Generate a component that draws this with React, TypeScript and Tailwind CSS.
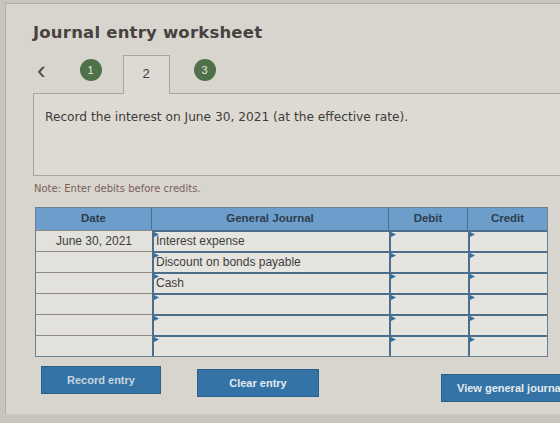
import React from 'react';

const rows = [
  { date: 'June 30, 2021', account: 'Interest expense' },
  { date: '', account: 'Discount on bonds payable' },
  { date: '', account: 'Cash' },
  { date: '', account: '' },
  { date: '', account: '' },
  { date: '', account: '' },
];

function Flag() {
  return (
    <svg className="absolute left-0 top-0" width="5" height="6" viewBox="0 0 5 6">
      <path d="M0 0 L5 2.5 L0 5 Z" fill="#2f6fa3" />
    </svg>
  );
}

function InputCell({ text, w }: { text?: string; w: string }) {
  return (
    <div className={`relative ${w} h-full border-l-2 border-t-2 border-[#4a6e8c] bg-[#e6e4de] px-[2px] text-[12px] leading-[18px] text-[#3d3d3d]`}>
      <Flag />
      {text}
    </div>
  );
}

export default function App() {
  return (
    <div className="w-[560px] h-[423px] overflow-hidden bg-[#c9c5be] pl-[5px] pt-[3px]" style={{ fontFamily: '"DejaVu Sans", Verdana, sans-serif' }}>
      <div className="h-[411px] overflow-hidden border-l border-t border-[#b3aea6] bg-[#d8d5ce] flex flex-col">
        <h1 className="pl-[27px] pt-[18px] text-[16.5px] font-bold tracking-[0.2px] text-[#47423f] leading-[22px]">Journal entry worksheet</h1>

        <div className="flex items-end h-[38px] mt-[11px] ml-[27px]">
          <div className="flex items-center h-full pb-[8px]">
            <span className="ml-[4px] text-[26px] leading-none text-[#4a4744] font-light" style={{ fontFamily: '"Liberation Sans", Arial, sans-serif' }}>&lsaquo;</span>
            <span className="ml-[34px] w-[22px] h-[22px] rounded-full bg-[#4f7048] flex items-center justify-center text-[11px] text-[#e6e8e0]" style={{ fontFamily: '"Liberation Sans", Arial, sans-serif' }}>1</span>
          </div>
          <div className="ml-[21px] w-[47px] h-[39px] border border-b-0 border-[#a9a49c] bg-[#dcd9d2] flex items-center justify-center pb-[3px] text-[13px] text-[#3e3c3a] mb-[-1px] relative z-10" style={{ fontFamily: '"Liberation Sans", Arial, sans-serif' }}>2</div>
          <div className="flex items-center h-full pb-[8px]">
            <span className="ml-[24px] w-[22px] h-[22px] rounded-full bg-[#4f7048] flex items-center justify-center text-[11px] text-[#e6e8e0]" style={{ fontFamily: '"Liberation Sans", Arial, sans-serif' }}>3</span>
          </div>
        </div>

        <div className="ml-[27px] h-[83px] border border-r-0 border-[#a9a49c] bg-[#dddad3] pl-[11px] pt-[14px] text-[12.2px] text-[#3f3c3a]">
          Record the interest on June 30, 2021 (at the effective rate).
        </div>

        <p className="ml-[28px] mt-[5px] text-[10px] text-[#7a5f59]">Note: Enter debits before credits.</p>

        <div className="ml-[29px] mt-[11px] w-[513px] border border-[#6b7f90] bg-[#e3e1db]" style={{ fontFamily: '"Liberation Sans", Arial, sans-serif' }}>
          <div className="flex h-[22px] bg-[#6d9dca] text-[11.5px] font-bold text-[#2e3d4c]">
            <div className="w-[116px] flex items-center justify-center border-r border-[#4a6e8c]">Date</div>
            <div className="w-[237px] flex items-center justify-center border-r border-[#4a6e8c]">General Journal</div>
            <div className="w-[79px] flex items-center justify-center border-r border-[#4a6e8c]">Debit</div>
            <div className="flex-1 flex items-center justify-center">Credit</div>
          </div>
          {rows.map((r, i) => (
            <div key={i} className="flex h-[21px]">
              <div className="w-[116px] h-full border-t border-[#8d8a85] flex items-center justify-center text-[12px] text-[#3d3d3d]">{r.date}</div>
              <InputCell w="w-[237px]" text={r.account} />
              <InputCell w="w-[79px]" />
              <InputCell w="flex-1" />
            </div>
          ))}
        </div>

        <div className="flex items-start mt-[9px] ml-[35px]" style={{ fontFamily: '"Liberation Sans", Arial, sans-serif' }}>
          <button className="shrink-0 w-[120px] h-[28px] bg-[#3473a6] border border-[#2a5f8a] text-[11px] font-bold text-[#c9d5df]">Record entry</button>
          <button className="shrink-0 ml-[36px] mt-[3px] w-[122px] h-[28px] bg-[#3473a6] border border-[#2a5f8a] text-[11px] font-bold text-[#e3eaf0]">Clear entry</button>
          <button className="shrink-0 ml-[122px] mt-[8px] w-[140px] h-[28px] bg-[#3473a6] border border-[#2a5f8a] text-[11px] font-bold text-[#e3eaf0] whitespace-nowrap text-left pl-[15px]">View general journal</button>
        </div>
      </div>
    </div>
  );
}
